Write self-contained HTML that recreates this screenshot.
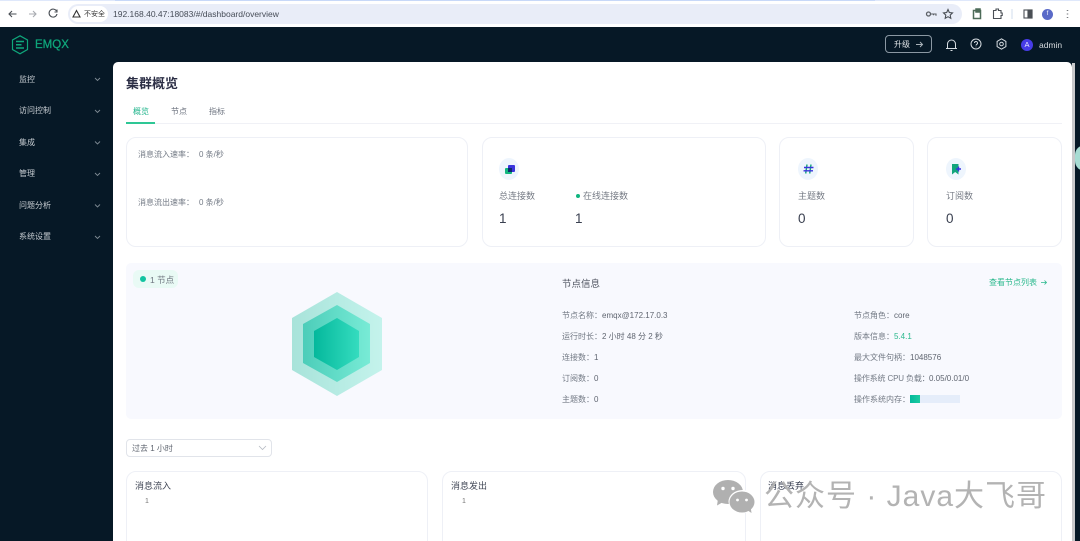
<!DOCTYPE html>
<html><head><meta charset="utf-8"><style>
*{box-sizing:border-box}
html,body{margin:0;padding:0;width:1080px;height:541px;overflow:hidden;background:#061826;font-family:"Liberation Sans","Noto Sans CJK SC",sans-serif}
#p{position:relative;width:1080px;height:541px;overflow:hidden;background:#061826}
.a{position:absolute;white-space:nowrap;line-height:1}
.card{position:absolute;background:#fff;border:1px solid #eef0f6;border-radius:10px}
.s{font-size:8px;color:#737a85}
.l{font-size:9px;color:#777c86}
.n{font-size:13.500px;color:#3a4050}
.nav{font-size:8px;color:#c6ccd1;left:19px}
svg{position:absolute;overflow:visible}
.ic{position:absolute;width:20px;height:22px;border-radius:50%;background:#eef5fd}
</style></head><body><div id="p">
<!-- browser bar -->
<div class="a" style="left:0;top:0;width:1080px;height:27px;background:#fff;border-top:1px solid #dfe8fb"></div>
<div class="a" style="left:115px;top:0;width:760px;height:1px;background:#c7d8f8"></div>
<div class="a" style="left:68px;top:4px;width:894px;height:20px;border-radius:10px;background:#e9edf8"></div>
<div class="a" style="left:70px;top:6px;width:38px;height:16px;border-radius:8px;background:#fff"></div>
<svg style="left:0;top:0" width="1080" height="27" fill="none" stroke="#4a4f55" stroke-width="1.100">
<path d="M16.500 14H9M12 11l-3 3 3 3"/>
<path d="M36 14h-7M33 11l3 3-3 3" stroke="#a8abb0"/>
<path d="M56.500 11a4 4 0 1 0 .5 3M57 9.500V12h-2.500"/>
<path d="M76.500 10.500l3.500 6.500h-7z" stroke="#333"/>
<circle cx="928.500" cy="14" r="2" stroke="#5c6066" stroke-width="1.300"/><path d="M930.500 14h5.500v1.800M933.500 14v1.300" stroke="#5c6066"/>
<path d="M948 9.500l1.300 3 3.200.4-2.300 2.200.6 3.200-2.800-1.600-2.800 1.600.6-3.200-2.300-2.200 3.200-.4z"/>
<path d="M973.500 10.500h7v8h-7zM976 9h4v3h-4z" stroke="#4d6b58" stroke-width="1.500"/>
<path d="M993.500 10.500h2.500v-1.500h2.500v1.500h2.500v2.500h1.200v2.500h-1.200v3h-7.500z"/>
<path d="M1012 9v10" stroke="#d5e0ee"/>
<rect x="1024" y="10" width="8" height="8"/><rect x="1028" y="10" width="4" height="8" fill="#4a4f55"/>
<path d="M1067.500 10v.8M1067.500 13.600v.8M1067.500 17.200v.8" stroke-width="1.500"/>
</svg>
<div class="a" style="left:84px;top:10.500px;font-size:7px;color:#333">不安全</div>
<div class="a" style="left:113px;top:9.500px;font-size:8.500px;color:#464c57">192.168.40.47:18083/#/dashboard/overview</div>
<div class="a" style="left:1042px;top:9px;width:11px;height:11px;border-radius:50%;background:#5a6ac8;color:#fff;font-size:6px;line-height:11px;text-align:center">f</div>
<!-- header -->
<svg style="left:11px;top:35px" width="18" height="20" fill="none" stroke="#0fa77b" stroke-width="1.200">
<path d="M9 .8L16.500 5v9.500L9 18.800 1.500 14.500V5z"/><path d="M5 6.500h8M5 9.800h5.500M5 13h8" stroke-width="1.500"/>
</svg>
<div class="a" style="left:35px;top:39.500px;font-size:11.500px;color:#0fa77b;-webkit-text-stroke:.25px #0fa77b">EMQX</div>
<div class="a" style="left:885px;top:35px;width:47px;height:18px;border:1px solid #8b98a3;border-radius:4px"></div>
<div class="a" style="left:894px;top:41px;font-size:8px;color:#dfe3e6">升级</div>
<svg style="left:0;top:0" width="1080" height="60" fill="none" stroke="#d5dbe0" stroke-width="1">
<path d="M916 44.500h6M920 42l2.500 2.500-2.500 2.500" stroke="#a9b2b9"/>
<path d="M947.500 48.500v-4.500a4 4 0 0 1 8 0v4.500zM946 48.500h11M950.500 50.500h2"/>
<circle cx="976" cy="44" r="5"/><path d="M974.500 43a1.500 1.500 0 1 1 2.200 1.300c-.5.3-.7.6-.7 1.200M976 46.800v.5"/>
<path d="M1001.500 38.800l4.400 2.600v5.200l-4.400 2.600-4.400-2.600v-5.200z"/><circle cx="1001.500" cy="44" r="1.800"/>
</svg>
<div class="a" style="left:1021px;top:39px;width:12px;height:12px;border-radius:50%;background:#473ce6;color:#e8e8ff;font-size:7.500px;line-height:12px;text-align:center">A</div>
<div class="a" style="left:1039px;top:40.500px;font-size:8.500px;color:#d6dade">admin</div>
<!-- sidebar -->
<div class="a nav" style="top:75.500px">监控</div>
<div class="a nav" style="top:107px">访问控制</div>
<div class="a nav" style="top:138.500px">集成</div>
<div class="a nav" style="top:170px">管理</div>
<div class="a nav" style="top:201.500px">问题分析</div>
<div class="a nav" style="top:233px">系统设置</div>
<svg style="left:0;top:0" width="112" height="250" fill="none" stroke="#7e8a93" stroke-width=".9">
<path d="M95 78l2.500 2.500L100 78M95 110l2.500 2.500L100 110M95 141.500l2.500 2.500 2.500-2.500M95 173l2.500 2.500 2.500-2.500M95 204.500l2.500 2.500 2.500-2.500M95 236l2.500 2.500 2.500-2.500"/>
</svg>
<!-- main -->
<div class="a" style="left:113px;top:62px;width:959px;height:479px;background:#fff;border-radius:5px 5px 0 0"></div>
<div class="a" style="left:1072px;top:63px;width:3px;height:478px;background:#c8c9cb"></div>
<div class="a" style="left:1075px;top:145px;width:10px;height:26px;border-radius:13px 0 0 13px;background:#a6dcd3"></div>
<div class="a" style="left:126px;top:76.500px;font-size:13px;font-weight:700;color:#2b2e45">集群概览</div>
<div class="a" style="left:133px;top:108px;font-size:8px;color:#23b58d">概览</div>
<div class="a" style="left:171px;top:108px;font-size:8px;color:#6e7480">节点</div>
<div class="a" style="left:209px;top:108px;font-size:8px;color:#6e7480">指标</div>
<div class="a" style="left:126px;top:122.500px;width:936px;height:1px;background:#f0f1f6"></div>
<div class="a" style="left:126px;top:122px;width:29px;height:1.500px;background:#2ec795"></div>
<!-- stat cards -->
<div class="card" style="left:126px;top:137px;width:342px;height:110px"></div>
<div class="a s" style="left:138px;top:151px">消息流入速率：</div><div class="a s" style="left:199px;top:151px">0 条/秒</div>
<div class="a s" style="left:138px;top:199px">消息流出速率：</div><div class="a s" style="left:199px;top:199px">0 条/秒</div>
<div class="card" style="left:482px;top:137px;width:284px;height:110px"></div>
<div class="ic" style="left:499px;top:158px"></div>
<div class="a" style="left:505px;top:168px;width:7px;height:6px;background:#12b77f;border-radius:1px"></div>
<div class="a" style="left:507.500px;top:164.500px;width:7px;height:7px;background:#3a35dd;border-radius:1px"></div>
<div class="a" style="left:507.500px;top:168px;width:4.500px;height:3.500px;background:#0e2a6e"></div>
<div class="a l" style="left:499px;top:192px">总连接数</div>
<div class="a" style="left:576px;top:194px;width:4px;height:4px;border-radius:50%;background:#0fb57f"></div>
<div class="a l" style="left:583px;top:192px">在线连接数</div>
<div class="a n" style="left:499px;top:212px">1</div>
<div class="a n" style="left:575px;top:212px">1</div>
<div class="card" style="left:779px;top:137px;width:135px;height:110px"></div>
<div class="ic" style="left:798px;top:158px"></div>
<svg style="left:798px;top:158px" width="22" height="22" fill="none" stroke-width="1.400"><path d="M9 6.500l-1.300 9M13 6.500l-1.300 9" stroke="#12a57c"/><path d="M6 9.500h9.500M5.500 12.800h9.500" stroke="#3a35dd"/></svg>
<div class="a l" style="left:798px;top:192px">主题数</div>
<div class="a n" style="left:798px;top:212px">0</div>
<div class="card" style="left:927px;top:137px;width:135px;height:110px"></div>
<div class="ic" style="left:946px;top:158px"></div>
<svg style="left:946px;top:158px" width="22" height="22"><path d="M6 6h6.500v10.500L9.200 14 6 16.500z" fill="#12a57c"/><path d="M12.500 8.500v5M10 11h5" stroke="#3a35dd" stroke-width="1.400"/></svg>
<div class="a l" style="left:946px;top:192px">订阅数</div>
<div class="a n" style="left:946px;top:212px">0</div>
<!-- node panel -->
<div class="a" style="left:126px;top:263px;width:936px;height:156px;background:#f8f9fe;border-radius:5px"></div>
<div class="a" style="left:133px;top:270px;width:45px;height:18px;border-radius:6px;background:#e9faf5"></div>
<div class="a" style="left:140px;top:276px;width:6px;height:6px;border-radius:50%;background:#12c3a0"></div>
<div class="a" style="left:150px;top:275.500px;font-size:8.500px;color:#6f7680">1 节点</div>
<svg style="left:280px;top:285px" width="115" height="120">
<defs>
<linearGradient id="g1"><stop offset="0" stop-color="#a8e3da"/><stop offset="1" stop-color="#c4f3ec"/></linearGradient>
<linearGradient id="g2"><stop offset="0" stop-color="#4ccdb9"/><stop offset="1" stop-color="#78ebd6"/></linearGradient>
<linearGradient id="g3"><stop offset="0" stop-color="#04b89c"/><stop offset="1" stop-color="#35dcbf"/></linearGradient>
</defs>
<path d="M57 7L102 33V85L57 111 12 85V33z" fill="url(#g1)"/>
<path d="M57 20L90 39V78L57 97 23 78V39z" fill="url(#g2)"/>
<path d="M57 33L79 46V72L57 85 34 72V46z" fill="url(#g3)"/>
</svg>
<div class="a" style="left:562px;top:279.500px;font-size:9.500px;color:#4b505c">节点信息</div>
<div class="a" style="left:989px;top:279px;font-size:8px;color:#2bb98d">查看节点列表</div>
<svg style="left:1040px;top:279px" width="8" height="8" fill="none" stroke="#2bb98d" stroke-width=".8"><path d="M1 3.500h5.500M4.500 1.500l2 2-2 2"/></svg>
<div class="a s" style="left:562px;top:312px">节点名称：</div><div class="a s" style="left:602px;top:312px;color:#5f6570">emqx@172.17.0.3</div>
<div class="a s" style="left:562px;top:333px">运行时长：</div><div class="a s" style="left:602px;top:333px;color:#5f6570">2 小时 48 分 2 秒</div>
<div class="a s" style="left:562px;top:354px">连接数：</div><div class="a s" style="left:594px;top:353.500px;color:#5f6570">1</div>
<div class="a s" style="left:562px;top:375px">订阅数：</div><div class="a s" style="left:594px;top:374.500px;color:#5f6570">0</div>
<div class="a s" style="left:562px;top:396px">主题数：</div><div class="a s" style="left:594px;top:395.500px;color:#5f6570">0</div>
<div class="a s" style="left:854px;top:312px">节点角色：</div><div class="a s" style="left:894px;top:312px;color:#5f6570">core</div>
<div class="a s" style="left:854px;top:333px">版本信息：</div><div class="a s" style="left:894px;top:333px;color:#2bb98d">5.4.1</div>
<div class="a s" style="left:854px;top:354px">最大文件句柄：</div><div class="a s" style="left:910px;top:353.500px;color:#5f6570">1048576</div>
<div class="a s" style="left:854px;top:375px;letter-spacing:-.15px">操作系统 CPU 负载：</div><div class="a s" style="left:929px;top:374.500px;color:#5f6570">0.05/0.01/0</div>
<div class="a s" style="left:854px;top:396px">操作系统内存：</div>
<div class="a" style="left:910px;top:395px;width:50px;height:8px;background:#e5edfa"></div>
<div class="a" style="left:910px;top:395px;width:9.500px;height:8px;background:linear-gradient(90deg,#04b89c,#1ccca0)"></div>
<!-- select -->
<div class="a" style="left:126px;top:439px;width:146px;height:18px;border:1px solid #e1e4ea;border-radius:4px;background:#fff"></div>
<div class="a" style="left:132px;top:444.500px;font-size:8px;color:#5f6570">过去 1 小时</div>
<svg style="left:258px;top:445px" width="9" height="6" fill="none" stroke="#b5bac2" stroke-width=".8"><path d="M1 1l3.500 3.500L8 1"/></svg>
<!-- charts -->
<div class="card" style="left:126px;top:471px;width:302px;height:80px"></div>
<div class="a" style="left:135px;top:481.500px;font-size:9px;color:#414756">消息流入</div>
<div class="a" style="left:145px;top:498px;font-size:7px;color:#777">1</div>
<div class="card" style="left:442px;top:471px;width:304px;height:80px"></div>
<div class="a" style="left:451px;top:481.500px;font-size:9px;color:#414756">消息发出</div>
<div class="a" style="left:462px;top:498px;font-size:7px;color:#777">1</div>
<div class="card" style="left:760px;top:471px;width:302px;height:80px"></div>
<div class="a" style="left:768px;top:481.500px;font-size:9px;color:#333a4d">消息丢弃</div>
<!-- watermark -->
<svg style="left:713px;top:480px" width="44" height="36">
<ellipse cx="15" cy="12" rx="15" ry="12" fill="#b0b0b0"/><path d="M5 19l-1 6.500 7-4z" fill="#b0b0b0"/>
<ellipse cx="29.500" cy="21.500" rx="14" ry="11.500" fill="#fff"/>
<ellipse cx="29" cy="22" rx="12.500" ry="10.500" fill="#b0b0b0"/><path d="M34 30l4.500 3-1-7z" fill="#b0b0b0"/>
<circle cx="10" cy="8.500" r="1.700" fill="#fff"/><circle cx="20" cy="8.500" r="1.700" fill="#fff"/>
<circle cx="24.500" cy="20" r="1.400" fill="#fff"/><circle cx="33.500" cy="20" r="1.400" fill="#fff"/>
</svg>
<div class="a" style="left:764px;top:482px;font-size:30px;color:#b3b3b3;letter-spacing:1px">公众号 · Java大飞哥</div>
</div></body></html>
